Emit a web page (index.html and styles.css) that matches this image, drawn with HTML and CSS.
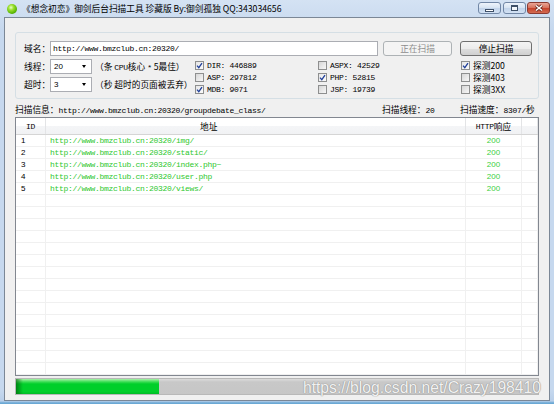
FILE: index.html
```html
<!DOCTYPE html>
<html>
<head>
<meta charset="utf-8">
<link rel="stylesheet" href="styles.css">
</head>
<body>
<div class="window">
  <div class="titlebar">
    <span class="app-icon"></span>
    <span class="title">《想念初恋》御剑后台扫描工具 珍藏版 By:御剑孤独 QQ:343034656</span>
    <div class="caption">
      <span class="cbtn min"><i></i></span>
      <span class="cbtn max"><i></i></span>
      <span class="cbtn close"><svg width="10" height="8" viewBox="0 0 10 8"><path d="M2 1.5 L8 6.5 M8 1.5 L2 6.5" stroke="#6b2a22" stroke-width="3"/><path d="M2 1.5 L8 6.5 M8 1.5 L2 6.5" stroke="#fff" stroke-width="1.5"/></svg></span>
    </div>
  </div>
  <div class="client">
    <div class="group">
      <div class="row1">
        <span class="label">域名：</span>
        <div class="input"><span class="m">http://www.bmzclub.cn:20320/</span></div>
        <button class="btn btn1 disabled">正在扫描</button>
        <button class="btn btn2">停止扫描</button>
      </div>
      <div class="row2">
        <div class="opts">
          <div class="opt">
            <span class="label">线程：</span>
            <div class="select">20<span class="arrow"></span></div>
            <span class="hint">（条 <span class="m">CPU</span>核心 <span class="m">*</span> 5最佳）</span>
          </div>
          <div class="opt">
            <span class="label">超时：</span>
            <div class="select">3<span class="arrow"></span></div>
            <span class="hint">（秒 超时的页面被丢弃）</span>
          </div>
        </div>
        <div class="checks">
          <div class="chk"><span class="box on"><svg width="7" height="7" viewBox="0 0 7 7"><path d="M1 3.6 L2.8 5.6 L6 1.2" fill="none" stroke="#21409a" stroke-width="1.3"/></svg></span><span class="txt m">DIR: 446889</span></div>
          <div class="chk"><span class="box"></span><span class="txt m">ASPX: 42529</span></div>
          <div class="chk"><span class="box on"><svg width="7" height="7" viewBox="0 0 7 7"><path d="M1 3.6 L2.8 5.6 L6 1.2" fill="none" stroke="#21409a" stroke-width="1.3"/></svg></span><span class="txt">探测200</span></div>
          <div class="chk"><span class="box"></span><span class="txt m">ASP: 297812</span></div>
          <div class="chk"><span class="box on"><svg width="7" height="7" viewBox="0 0 7 7"><path d="M1 3.6 L2.8 5.6 L6 1.2" fill="none" stroke="#21409a" stroke-width="1.3"/></svg></span><span class="txt m">PHP: 52815</span></div>
          <div class="chk"><span class="box"></span><span class="txt">探测403</span></div>
          <div class="chk"><span class="box on"><svg width="7" height="7" viewBox="0 0 7 7"><path d="M1 3.6 L2.8 5.6 L6 1.2" fill="none" stroke="#21409a" stroke-width="1.3"/></svg></span><span class="txt m">MDB: 9071</span></div>
          <div class="chk"><span class="box"></span><span class="txt m">JSP: 19739</span></div>
          <div class="chk"><span class="box"></span><span class="txt">探测3XX</span></div>
        </div>
      </div>
    </div>
    <div class="info">
      <span class="left">扫描信息：<span class="m">http://www.bmzclub.cn:20320/groupdebate_class/</span></span>
      <span class="threads">扫描线程：<span class="m">20</span></span>
      <span class="speed">扫描速度：<span class="m">8307/</span>秒</span>
    </div>
    <div class="table">
      <div class="thead">
        <div class="th"><span class="m">ID</span></div>
        <div class="th addr">地址</div>
        <div class="th"><span class="m">HTTP</span>响应</div>
        <div class="th"></div>
      </div>
      <div class="tr"><div class="td">1</div><div class="td url">http://www.bmzclub.cn:20320/img/</div><div class="td code">200</div><div class="td"></div></div>
      <div class="tr"><div class="td">2</div><div class="td url">http://www.bmzclub.cn:20320/static/</div><div class="td code">200</div><div class="td"></div></div>
      <div class="tr"><div class="td">3</div><div class="td url">http://www.bmzclub.cn:20320/index.php~</div><div class="td code">200</div><div class="td"></div></div>
      <div class="tr"><div class="td">4</div><div class="td url">http://www.bmzclub.cn:20320/user.php</div><div class="td code">200</div><div class="td"></div></div>
      <div class="tr"><div class="td">5</div><div class="td url">http://www.bmzclub.cn:20320/views/</div><div class="td code">200</div><div class="td"></div></div>
      <div class="tr"><div class="td"></div><div class="td"></div><div class="td"></div><div class="td"></div></div>
      <div class="tr"><div class="td"></div><div class="td"></div><div class="td"></div><div class="td"></div></div>
      <div class="tr"><div class="td"></div><div class="td"></div><div class="td"></div><div class="td"></div></div>
      <div class="tr"><div class="td"></div><div class="td"></div><div class="td"></div><div class="td"></div></div>
      <div class="tr"><div class="td"></div><div class="td"></div><div class="td"></div><div class="td"></div></div>
      <div class="tr"><div class="td"></div><div class="td"></div><div class="td"></div><div class="td"></div></div>
      <div class="tr"><div class="td"></div><div class="td"></div><div class="td"></div><div class="td"></div></div>
      <div class="tr"><div class="td"></div><div class="td"></div><div class="td"></div><div class="td"></div></div>
      <div class="tr"><div class="td"></div><div class="td"></div><div class="td"></div><div class="td"></div></div>
      <div class="tr"><div class="td"></div><div class="td"></div><div class="td"></div><div class="td"></div></div>
      <div class="tr"><div class="td"></div><div class="td"></div><div class="td"></div><div class="td"></div></div>
      <div class="tr"><div class="td"></div><div class="td"></div><div class="td"></div><div class="td"></div></div>
      <div class="tr"><div class="td"></div><div class="td"></div><div class="td"></div><div class="td"></div></div>
      <div class="tr"><div class="td"></div><div class="td"></div><div class="td"></div><div class="td"></div></div>
      <div class="tr"><div class="td"></div><div class="td"></div><div class="td"></div><div class="td"></div></div>
    </div>
    <div class="progress"><div class="fill" style="width:27.4%"></div></div>
    <div class="watermark">https://blog.csdn.net/Crazy198410</div>
  </div>
</div>
</body>
</html>
```
FILE: styles.css
```css
* { box-sizing: border-box; margin: 0; padding: 0; }
html, body { width: 554px; height: 404px; overflow: hidden; }
body {
  background: #c6d8ee;
  font-family: "Noto Sans CJK SC", sans-serif;
  font-size: 8.7px;
  color: #000;
}
.m {
  font-family: "Liberation Mono", "Noto Sans CJK SC", monospace;
  font-size: 8px;
  letter-spacing: -0.3px;
}

.window {
  display: flex;
  flex-direction: column;
  height: 404px;
  background: linear-gradient(#d4e2f3, #c6d8ee 30px, #c6d8ee 390px, #b9cfe9 401px, #6aa8d4 403px);
}
.titlebar { height: 17px; display: flex; align-items: center; flex-shrink: 0; }
.app-icon {
  width: 10px; height: 10px; border-radius: 50%; margin-left: 7px; flex-shrink: 0;
  background: radial-gradient(circle at 40% 35%, #eaffc8 0, #9be030 30%, #52b000 70%, #2f7d00 100%);
}
.title { margin-left: 5px; white-space: nowrap; line-height: 12px; }
.caption { margin-left: auto; margin-right: 4px; display: flex; align-self: flex-start; margin-top: 2px; }
.cbtn {
  height: 12px; width: 23px; border: 1px solid #7187a6; border-radius: 3px;
  background: linear-gradient(#eef4fb, #d6e3f2 50%, #c1d3ea 51%, #d3e2f4);
  display: flex; align-items: center; justify-content: center;
}
.cbtn + .cbtn { margin-left: 2px; }
.cbtn.close {
  width: 23px; margin-left: 1px; border-color: #8a3b33;
  background: linear-gradient(#eaa596, #d66f5a 50%, #c5412b 51%, #d46c52);
}
.min i { display: block; width: 9px; height: 3px; border: 1px solid #3e5068; background: #fff; margin-top: 4px; }
.max i { display: block; width: 7px; height: 6px; border: 1px solid #3e5068; border-top-width: 2px; background: #f4f8fc; }

.client {
  position: relative;
  flex: 1;
  margin: 0 4px 3px;
  border: 1px solid #7b8796;
  background: #f0f0f0;
  padding: 14px 10px 5px;
  display: flex;
  flex-direction: column;
}

.group {
  border: 1px solid #d5dfe5;
  border-radius: 3px;
  padding: 8px 5px 0 8px;
  height: 67px;
  flex-shrink: 0;
}
.row1 { display: flex; align-items: center; height: 15px; }
.label { width: 26px; flex-shrink: 0; white-space: nowrap; }
.input {
  width: 328px; height: 15px; border: 1px solid #abadb3; background: #fff;
  padding-left: 2px; display: flex; align-items: center; flex-shrink: 0;
}
.btn {
  height: 15px; border: 1px solid #707070; border-radius: 3px;
  background: linear-gradient(#f4f4f4, #ececec 50%, #dedede 51%, #d0d0d0);
  font: inherit; color: #000;
  display: flex; align-items: center; justify-content: center; flex-shrink: 0;
}
.btn.disabled { color: #8d8d8d; border-color: #adb2b5; background: #f4f4f4; }
.btn1 { width: 69px; margin-left: 5px; }
.btn2 { width: 72px; margin-left: 8px; }

.row2 { display: flex; margin-top: 3px; }
.opts { width: 171px; display: flex; flex-direction: column; gap: 3px; flex-shrink: 0; }
.opt { display: flex; align-items: center; height: 15px; white-space: nowrap; }
.select {
  width: 42px; height: 15px; border: 1px solid #abadb3; background: #fff;
  position: relative; padding-left: 3px; display: flex; align-items: center;
  font-family: "Liberation Sans", sans-serif; font-size: 8px; flex-shrink: 0;
}
.arrow {
  position: absolute; right: 5px; top: 5px;
  border-left: 2.5px solid transparent; border-right: 2.5px solid transparent; border-top: 3px solid #000;
}
.hint { margin-left: 3px; }

.checks { display: grid; grid-template-columns: 123px 143px auto; grid-auto-rows: 12px; margin-top: 2px; }
.chk { display: flex; align-items: center; height: 9px; white-space: nowrap; }
.box {
  width: 9px; height: 9px; border: 1px solid #8e8f8f; flex-shrink: 0;
  background: linear-gradient(135deg, #d6d6d6, #f7f7f7);
  display: flex;
}
.box.on { background: linear-gradient(135deg, #e6e6e6, #fbfbfb); }
.chk .txt { margin-left: 3px; line-height: 9px; }

.info { height: 18px; padding-top: 4px; display: flex; line-height: 14px; white-space: nowrap; flex-shrink: 0; }
.info .left { flex: 1; }
.info .threads { width: 78px; }
.info .speed { width: 79px; }

.table {
  flex: 1; border: 1px solid #828790; background: #fff;
  display: flex; flex-direction: column; overflow: hidden;
}
.thead {
  height: 17px; flex-shrink: 0;
  display: grid; grid-template-columns: 30px 420px 56px 1fr;
  background: linear-gradient(#ffffff, #ffffff 50%, #f4f5f7 51%, #f1f2f4);
  border-bottom: 1px solid #d5d5d5;
}
.th { border-right: 1px solid #e3e4e6; display: flex; align-items: center; justify-content: center; white-space: nowrap; }
.th.addr { justify-content: flex-start; padding-left: 154px; }
.tr {
  height: 12px; flex-shrink: 0;
  display: grid; grid-template-columns: 30px 420px 56px 1fr;
  border-bottom: 1px solid #f0f0f0;
}
.td {
  border-right: 1px solid #f0f0f0; display: flex; align-items: center; padding-left: 5px;
  white-space: nowrap; overflow: hidden;
  font-family: "Liberation Sans", sans-serif; font-size: 8px;
}
.td.url {
  color: #2ec82e; padding-left: 4px;
  font-family: "Liberation Mono", monospace; font-size: 8px; letter-spacing: -0.3px;
}
.td.code { justify-content: center; padding-left: 0; color: #3ccf3c; }

.progress {
  height: 17px; margin-top: 2px; flex-shrink: 0;
  border: 1px solid #b8b8b8;
  background: linear-gradient(#dcdcdc, #c8c8c8 3px, #c6c6c6);
}
.fill {
  height: 100%;
  background:
    linear-gradient(90deg, rgba(0, 70, 0, 0.55), rgba(0, 0, 0, 0) 7px),
    linear-gradient(#a8f2a8, #36dc50 3px, #00cf2a 5px, #00cf2a 85%, #00ba26);
}

.watermark {
  position: absolute; right: 8px; top: 361px;
  font-family: "Liberation Sans", sans-serif; font-size: 15.7px; line-height: 18px;
  color: #f2f2f2;
  text-shadow: 0 0 1px #8f8f8f, 0 0 1px #8f8f8f;
  white-space: nowrap;
}
```
